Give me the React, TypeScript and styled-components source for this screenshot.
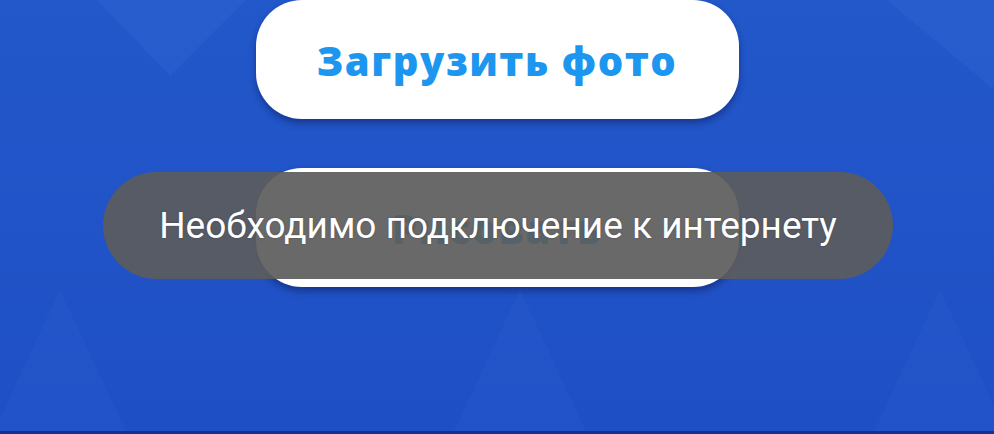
import React from "react";
import styled, { createGlobalStyle } from "styled-components";

const Global = createGlobalStyle`
  html, body {
    margin: 0;
    padding: 0;
    width: 994px;
    height: 434px;
    overflow: hidden;
    background: #2152c6;
  }
`;

const Screen = styled.div`
  position: relative;
  width: 994px;
  height: 434px;
  overflow: hidden;
  box-sizing: border-box;
  border-bottom: 3px solid #18308c;
  display: flex;
  flex-direction: column;
  align-items: center;
  gap: 49px;
  background-color: #2053c7;
  background-image:
    conic-gradient(from -44deg at 170px 76px, rgba(110, 160, 255, 0.07) 0deg 89deg, transparent 89deg 360deg),
    conic-gradient(from -50deg at 992px 88px, rgba(110, 160, 255, 0.07) 0deg 90deg, transparent 90deg 360deg),
    conic-gradient(from 155deg at 60px 290px, rgba(110, 160, 255, 0.04) 0deg 50deg, transparent 50deg 360deg),
    conic-gradient(from 155deg at 520px 290px, rgba(110, 160, 255, 0.04) 0deg 50deg, transparent 50deg 360deg),
    conic-gradient(from 155deg at 940px 290px, rgba(110, 160, 255, 0.04) 0deg 50deg, transparent 50deg 360deg),
    linear-gradient(180deg, #2258ca 0%, #1f4fc5 100%);
`;

const PillButton = styled.div`
  width: 483px;
  height: 119px;
  flex: none;
  border-radius: 46px;
  background: #ffffff;
  box-shadow: 0 4px 7px rgba(8, 20, 70, 0.45);
  display: flex;
  align-items: center;
  justify-content: center;
  padding-top: 2px;
  box-sizing: border-box;
  font-family: "Open Sans", Lato, sans-serif;
  font-weight: 800;
  font-size: 40px;
  letter-spacing: 1.5px;
  color: #1c96ee;
`;

const Toast = styled.div`
  position: absolute;
  top: 172px;
  left: 103px;
  width: 790px;
  height: 107px;
  border-radius: 54px;
  background: rgba(92, 92, 92, 0.92);
  display: flex;
  align-items: center;
  justify-content: center;
  font-family: Roboto, "Noto Sans", sans-serif;
  font-size: 37px;
  color: #ffffff;
  text-shadow: 0 0 2px rgba(0, 0, 0, 0.25);
`;

export default function App() {
  return (
    <>
      <Global />
      <Screen>
        <PillButton>Загрузить фото</PillButton>
        <PillButton>Рисовать</PillButton>
        <Toast>Необходимо подключение к интернету</Toast>
      </Screen>
    </>
  );
}
